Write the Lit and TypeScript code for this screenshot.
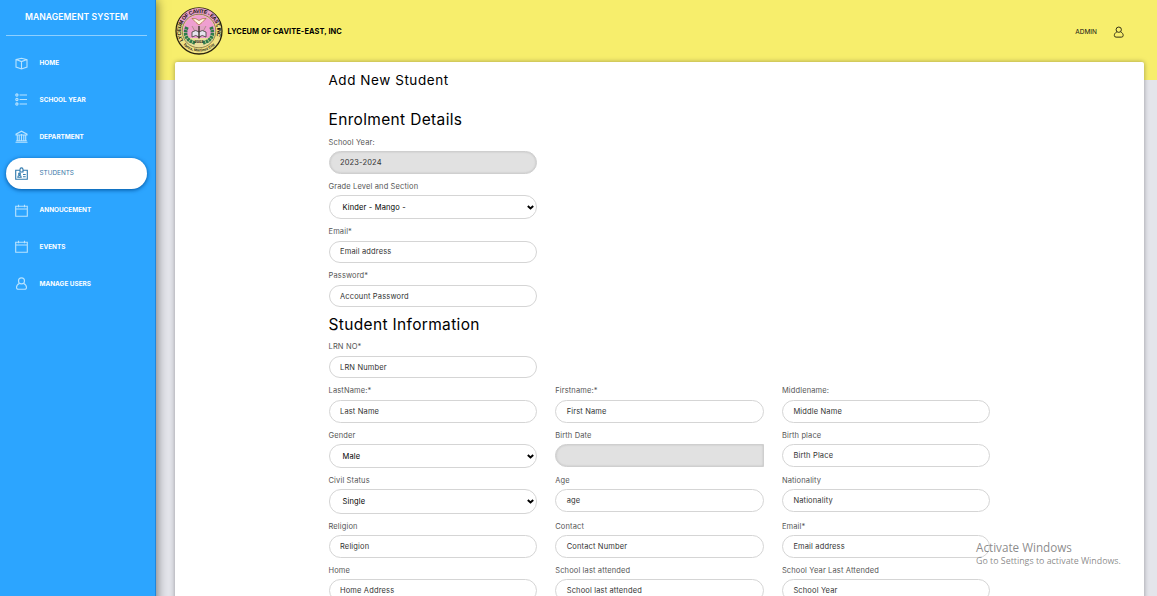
import { LitElement, html, svg, css, nothing } from "lit";
import { customElement, property } from "lit/decorators.js";

const icons: Record<string, unknown> = {
  box: svg`<path d="M1 2.600 6.500 1.200 12 2.600V10L6.500 12 1 10zM1 2.600 6.500 4.600 12 2.600M6.500 4.600V12"/>`,
  list: svg`<circle cx="1.900" cy="2" r="1.100"/><circle cx="1.900" cy="6.500" r="1.100"/><circle cx="1.900" cy="11" r="1.100"/><path d="M4.600 2H12M4.600 6.500H12M4.600 11H12"/>`,
  bank: svg`<path d="M.5 12.300H12.500M1.200 10.800H11.800M1 5V4.200L6.500 1.200 12 4.200V5zM2.300 5V10.800M4.200 5V10.800M6.500 4V10.800M8.800 5V10.800M10.700 5V10.800"/>`,
  badge: svg`<path d="M5 3.300H.7V12.300H12.300V3.300H8M5 5V2.600A1.500 1.700 0 0 1 8 2.600V5zM2.800 10.300Q2.800 8.500 4.500 8.500T6.200 10.300zM8 7.500H10.700M8 9.700H10.700"/><circle cx="4.500" cy="7" r=".9"/>`,
  calendar: svg`<path d="M.7 2.200H12.300V12.200H.7zM.7 5H12.300M3.500 .7V3.300M9.500 .7V3.300"/>`,
  user: svg`<circle cx="6.500" cy="3.900" r="3"/><path d="M4.300 6.400C2.500 7.300 1.500 8.700 1.500 10.400Q1.500 12.300 3.500 12.300H9.500Q11.500 12.300 11.500 10.400C11.500 8.700 10.500 7.300 8.700 6.400"/>`,
};

@customElement("line-icon")
class LineIcon extends LitElement {
  @property() name = "box";
  static styles = css`
    :host { display: block; width: 13px; height: 13px; }
    svg { display: block; width: 100%; height: 100%; fill: none; stroke: currentColor; stroke-width: 1.1; }
  `;
  render() {
    return html`<svg viewBox="0 0 13 13">${icons[this.name]}</svg>`;
  }
}

@customElement("school-seal")
class SchoolSeal extends LitElement {
  static styles = css`
    :host { display: block; width: 48px; height: 48px; }
    svg { display: block; }
    text { font-family: "Liberation Sans", sans-serif; font-weight: 700; fill: #171310; }
  `;
  render() {
    return html`<svg width="48" height="48" viewBox="0 0 48 48">
      <defs>
        <path id="arc-top" d="M8.400 33.500A18.200 18.200 0 1 1 39.600 33.500" />
        <path id="arc-low" d="M5.500 34A21.600 21.600 0 0 0 42.500 34" />
      </defs>
      <circle cx="24" cy="24" r="23" fill="#efe184" stroke="#29230e" stroke-width="1.300" />
      <path d="M3.500 15A22 22 0 0 1 44.500 15L36 19H12z" fill="#e8a0c8" />
      <circle cx="24" cy="24" r="16.800" fill="#eadf9d" stroke="#6b5c2c" stroke-width=".7" />
      <path d="M8 24A16 16 0 0 1 40 24L33 31H15z" fill="#ef9fd0" />
      <path d="M12 20Q8 29 15 34L20 36M36 20Q40 29 33 34L28 36" fill="none" stroke="#2f7a4c" stroke-width="3.600" stroke-dasharray="2.500 .6" />
      <path d="M17 19 24 32 31 19" fill="#e3a4c4" stroke="#7d6850" stroke-width=".5" />
      <path d="M17 11.500Q21 11 24 13.500Q27 11 31 11.500L27 15.500 24 18 21 15.500z" fill="#fff5df" stroke="#a2632f" stroke-width=".7" />
      <path d="M17 25Q21 22 24 25Q27 22 31 25V30Q27 27 24 30Q21 27 17 30z" fill="#e7e3ee" stroke="#3c3734" stroke-width=".8" />
      <path d="M24 19V31" stroke="#30291f" stroke-width="1.300" />
      <text font-size="5.400"><textPath href="#arc-top" textLength="72">LYCEUM OF CAVITE - EAST, INC</textPath></text>
      <text font-size="3.700"><textPath href="#arc-low" startOffset="50%" text-anchor="middle">Tanza, Martinez City</textPath></text>
      <text x="24" y="35.500" font-size="4" text-anchor="middle">2002</text>
    </svg>`;
  }
}

@customElement("form-field")
class FormField extends LitElement {
  @property() label = "";
  @property() text = "";
  @property() kind = "input";
  static styles = css`
    :host { display: block; }
    .label { box-sizing: border-box; height: 13px; padding-top: 0.600px; line-height: 13px; margin-bottom: 3px; font-size: 7.500px; letter-spacing: 0.140px; color: #555; white-space: nowrap; }
    .control { display: flex; align-items: center; justify-content: space-between; box-sizing: border-box; height: 22.800px; padding: 0 2px 0 10.500px; border: 1px solid #d5d5d5; border-radius: 12px; background: #fff; color: #333; font-size: 7.500px; letter-spacing: 0.150px; white-space: nowrap; }
    .select { height: 24.200px; padding-left: 13px; color: #000; }
    .disabled, .date { background: #e1e1e1; border-color: #cfcfcf; box-shadow: inset 0 0 2px #bbb; }
    .date { border-radius: 12px 0 0 12px; }
    .chevron { width: 7px; height: 5px; fill: none; stroke: #000; stroke-width: 1.900; }
  `;
  render() {
    return html`<div class="label">${this.label}</div>
      <div class="control ${this.kind}">
        <span>${this.text}</span>
        ${this.kind === "select" ? html`<svg class="chevron" viewBox="0 0 7 5"><path d="M.8 1 3.500 3.500 6.200 1" /></svg>` : nothing}
      </div>`;
  }
}

const menu = [
  ["box", "HOME"],
  ["list", "SCHOOL YEAR"],
  ["bank", "DEPARTMENT"],
  ["badge", "STUDENTS"],
  ["calendar", "ANNOUCEMENT"],
  ["calendar", "EVENTS"],
  ["user", "MANAGE USERS"],
];

const enrolment = [
  ["School Year:", "2023-2024", "disabled"],
  ["Grade Level and Section", "Kinder - Mango -", "select"],
  ["Email*", "Email address", "input"],
  ["Password*", "Account Password", "input"],
];

const student = [
  ["LastName:*", "Last Name", "input"],
  ["Firstname:*", "First Name", "input"],
  ["Middlename:", "Middle Name", "input"],
  ["Gender", "Male", "select"],
  ["Birth Date", "", "date"],
  ["Birth place", "Birth Place", "input"],
  ["Civil Status", "Single", "select"],
  ["Age", "age", "input"],
  ["Nationality", "Nationality", "input"],
  ["Religion", "Religion", "input"],
  ["Contact", "Contact Number", "input"],
  ["Email*", "Email address", "input"],
  ["Home", "Home Address", "input"],
  ["School last attended", "School last attended", "input"],
  ["School Year Last Attended", "School Year", "input"],
];

const field = ([label, text, kind]: string[]) =>
  html`<form-field .label=${label} .text=${text} .kind=${kind}></form-field>`;

@customElement("app-root")
class AppRoot extends LitElement {
  static styles = css`
    :host { display: block; width: 1157px; height: 596px; overflow: hidden; position: relative; font-family: Inter, "Open Sans", sans-serif; }
    .layout { display: grid; grid-template-columns: 156px 1fr; height: 596px; }
    .sidebar { position: relative; z-index: 2; box-sizing: border-box; background: #2ca5ff; padding: 0 8px 0 6px; border-right: 1px solid #1f86dc; border-bottom: 1px solid #1686e0; box-shadow: 1px 0 10px rgba(0,0,0,.5); color: #fff; }
    .brand { height: 35px; line-height: 34px; text-align: center; font-size: 8.600px; font-weight: 600; letter-spacing: 0.080px; border-bottom: 1px solid #8ed0ff; }
    .menu { display: flex; flex-direction: column; gap: 5.800px; margin-top: 11.500px; }
    .item { display: flex; align-items: center; gap: 11.500px; height: 31px; padding-left: 9px; border-radius: 16px; font-size: 6.400px; font-weight: 700; }
    .item line-icon { color: #b9e3ff; }
    .item.active { background: #fff; color: #3977a8; font-weight: 400; box-shadow: 0 1px 4px #00509a; }
    .item.active line-icon { color: #2f79ad; }
    .main { background: linear-gradient(#f7ee6c 0 80.500px, #e4e5eb 80.500px); padding: 0 13.500px 0 18.500px; }
    .topbar { display: flex; align-items: center; height: 62px; color: #111; }
    .topbar school-seal { margin-right: 5px; }
    .school { font-size: 7.450px; font-weight: 700; letter-spacing: 0.080px; color: #000; text-shadow: 0 0 3px #fff36a; padding-top: 1px; }
    .admin { margin-left: auto; font-size: 6.500px; padding-top: 1px; }
    .topbar line-icon { width: 11.500px; height: 12px; margin: 1px 19px 0 16px; color: #2d2b14; }
    .card { box-sizing: border-box; height: 560px; background: #fff; box-shadow: 0 0 5px rgba(0,0,0,.35); border-radius: 2px 2px 0 0; padding: 8px 0 0 154px; }
    .title { height: 20px; line-height: 20px; font-size: 13.500px; letter-spacing: 0.550px; }
    .heading { height: 22px; line-height: 22px; font-size: 15.500px; letter-spacing: 0.340px; }
    .first { margin-top: 18.500px; }
    .fields { display: grid; grid-template-columns: repeat(3, 208.400px); column-gap: 18.300px; row-gap: 5.300px; }
    .single { grid-template-columns: 208.400px; }
    .enrol { margin: 4.500px 0 6.300px; }
    .lrn { margin: 3.900px 0 5.400px; }
    .watermark { position: absolute; z-index: 3; left: 976px; top: 539px; font-family: "Open Sans", "Noto Sans", sans-serif; color: rgba(100,100,100,.75); white-space: nowrap; }
    .wm-title { font-size: 11.700px; line-height: 16px; }
    .wm-sub { font-size: 8.850px; line-height: 12px; }
  `;
  render() {
    return html`
      <div class="layout">
        <nav class="sidebar">
          <div class="brand">MANAGEMENT SYSTEM</div>
          <div class="menu">
            ${menu.map(([icon, label]) => html`<div class="item ${label === "STUDENTS" ? "active" : ""}"><line-icon .name=${icon}></line-icon><span>${label}</span></div>`)}
          </div>
        </nav>
        <main class="main">
          <header class="topbar">
            <school-seal></school-seal>
            <span class="school">LYCEUM OF CAVITE-EAST, INC</span>
            <span class="admin">ADMIN</span>
            <line-icon name="user"></line-icon>
          </header>
          <section class="card">
            <div class="title">Add New Student</div>
            <div class="heading first">Enrolment Details</div>
            <div class="fields single enrol">${enrolment.map(field)}</div>
            <div class="heading">Student Information</div>
            <div class="fields single lrn">${field(["LRN NO*", "LRN Number", "input"])}</div>
            <div class="fields">${student.map(field)}</div>
          </section>
        </main>
      </div>
      <div class="watermark">
        <div class="wm-title">Activate Windows</div>
        <div class="wm-sub">Go to Settings to activate Windows.</div>
      </div>
    `;
  }
}
